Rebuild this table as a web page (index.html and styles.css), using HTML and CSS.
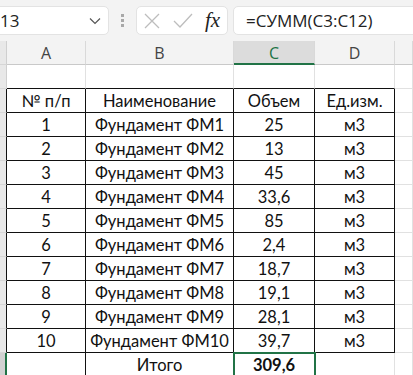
FILE: index.html
```html
<!DOCTYPE html>
<html>
<head>
<meta charset="utf-8">
<link rel="stylesheet" href="styles.css">
</head>
<body>
<div class="toolbar">
  <div class="namebox"><span class="nb-text">13</span>
    <svg class="chev" width="12" height="8" viewBox="0 0 12 8"><path d="M1 1.5 L6 6.5 L11 1.5" fill="none" stroke="#555" stroke-width="1.2"/></svg>
  </div>
  <div class="dots"><i></i><i></i><i></i></div>
  <div class="fxbox">
    <svg width="16" height="16" viewBox="0 0 16 16"><path d="M1 1 L15 15 M15 1 L1 15" stroke="#bdbdbd" stroke-width="1.3" fill="none"/></svg>
    <svg width="20" height="15" viewBox="0 0 20 15"><path d="M1 8 L7 14 L19 1" stroke="#bdbdbd" stroke-width="1.3" fill="none"/></svg>
    <span class="fx">fx</span>
  </div>
  <div class="formula">=СУММ(C3:C12)</div>
</div>
<div class="sheet">
  <div class="rh hdr"></div><div class="ch">A</div><div class="ch">B</div><div class="ch sel">C</div><div class="ch">D</div><div class="ch"></div>

  <div class="rh tb"></div><div class="c bb"></div><div class="c bb"></div><div class="c bb"></div><div class="c bb"></div><div class="c"></div>

  <div class="rh tl"></div><div class="c t">№ п/п</div><div class="c t">Наименование</div><div class="c t">Объем</div><div class="c t">Ед.изм.</div><div class="c"></div>

  <div class="rh tl"></div><div class="c t">1</div><div class="c t">Фундамент ФМ1</div><div class="c t">25</div><div class="c t">м3</div><div class="c"></div>
  <div class="rh tl"></div><div class="c t">2</div><div class="c t">Фундамент ФМ2</div><div class="c t">13</div><div class="c t">м3</div><div class="c"></div>
  <div class="rh tl"></div><div class="c t">3</div><div class="c t">Фундамент ФМ3</div><div class="c t">45</div><div class="c t">м3</div><div class="c"></div>
  <div class="rh tl"></div><div class="c t">4</div><div class="c t">Фундамент ФМ4</div><div class="c t">33,6</div><div class="c t">м3</div><div class="c"></div>
  <div class="rh tl"></div><div class="c t">5</div><div class="c t">Фундамент ФМ5</div><div class="c t">85</div><div class="c t">м3</div><div class="c"></div>
  <div class="rh tl"></div><div class="c t">6</div><div class="c t">Фундамент ФМ6</div><div class="c t">2,4</div><div class="c t">м3</div><div class="c"></div>
  <div class="rh tl"></div><div class="c t">7</div><div class="c t">Фундамент ФМ7</div><div class="c t">18,7</div><div class="c t">м3</div><div class="c"></div>
  <div class="rh tl"></div><div class="c t">8</div><div class="c t">Фундамент ФМ8</div><div class="c t">19,1</div><div class="c t">м3</div><div class="c"></div>
  <div class="rh tl"></div><div class="c t">9</div><div class="c t">Фундамент ФМ9</div><div class="c t">28,1</div><div class="c t">м3</div><div class="c"></div>
  <div class="rh tl"></div><div class="c t">10</div><div class="c t">Фундамент ФМ10</div><div class="c t">39,7</div><div class="c t">м3</div><div class="c"></div>

  <div class="rh selrow"></div><div class="c br"></div><div class="c">Итого</div><div class="c active">309,6</div><div class="c"></div><div class="c"></div>
</div>
</body>
</html>
```
FILE: styles.css
```css
* { box-sizing: border-box; }
html, body { margin: 0; padding: 0; background: #fff; overflow: hidden; }
body { width: 413px; height: 375px; }

.toolbar {
  height: 41px;
  background: #f3f3f3;
  display: flex;
  align-items: center;
  position: relative;
}
.namebox {
  width: 115px; height: 29px;
  margin-left: -6px;
  background: #fff;
  border: 1px solid #e3e3e3;
  border-radius: 5px;
  display: flex; align-items: center; justify-content: space-between;
  padding: 0 7px 0 5px;
  font-family: "Open Sans", sans-serif; font-size: 17px; color: #222;
}
.chev { margin-top: 1px; }
.dots { width: 27px; display: flex; flex-direction: column; align-items: center; gap: 2px; }
.dots i { width: 3px; height: 3px; background: #a8a8a8; display: block; }
.fxbox {
  width: 92px; height: 29px;
  background: #fff;
  border: 1px solid #e3e3e3;
  border-radius: 5px;
  display: flex; align-items: center; gap: 0;
  padding-left: 7px;
}
.fxbox svg:first-child { margin-right: 13px; }
.fxbox svg:nth-child(2) { margin-right: 12px; }
.fx { font-family: "Liberation Serif", serif; font-style: italic; font-size: 21px; color: #222; }
.formula {
  flex: 1; height: 29px;
  margin-left: 5px; margin-right: -8px;
  background: #fff;
  border: 1px solid #e3e3e3;
  border-radius: 5px;
  display: flex; align-items: center;
  padding-left: 12px;
  font-family: "Open Sans", sans-serif; font-size: 17px; color: #222;
}

.sheet {
  display: grid;
  grid-template-columns: 7px 79px 148px 81px 80px 1fr;
  grid-auto-rows: 24px;
  font-family: Lato, "Liberation Sans", sans-serif;
  font-size: 16.5px;
  color: #111;
}
.sheet > div {
  display: flex; align-items: center; justify-content: center;
  border-right: 1px solid #e1e1e1;
  border-bottom: 1px solid #e1e1e1;
  white-space: nowrap;
}
.rh { background: #e8e8e8; border-right: 1px solid #cfcfcf !important; border-bottom: 1px solid #d6d6d6 !important; }
.rh.tl { border-right: 1px solid #111 !important; }
.rh.selrow { background: #d2d2d2; border-right: 2px solid #217346 !important; }
.ch {
  background: #f3f3f3;
  font-family: "Open Sans", sans-serif; font-size: 16px; color: #444;
  border-right: 1px solid #d9d9d9 !important;
  border-bottom: 1px solid #c9c9c9 !important;
  padding-top: 1px;
}
.ch.sel { background: #dcdcdc; color: #217346; border-bottom: 2px solid #217346 !important; }
.c.bb { border-bottom: 1px solid #111; }
.c.t { border-right: 1px solid #111; border-bottom: 1px solid #111; }
.c.br { border-right: 1px solid #111; }
.c.active {
  font-weight: bold;
  outline: 2px solid #217346;
  outline-offset: -1px;
  position: relative;
}
```
